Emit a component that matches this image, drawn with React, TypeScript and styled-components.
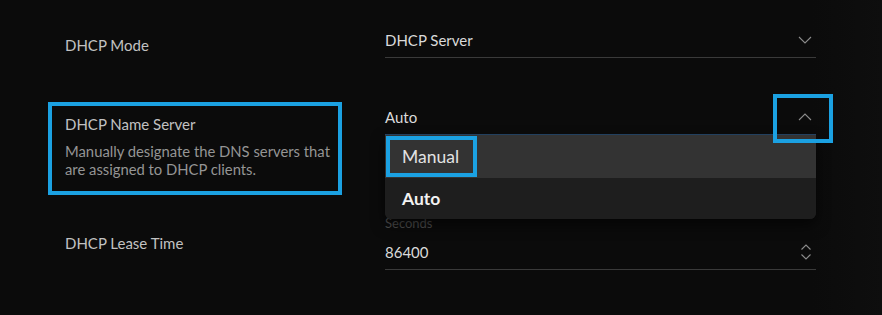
import React from 'react'
import styled, { createGlobalStyle } from 'styled-components'

const GlobalStyle = createGlobalStyle`
    html, body {
        margin: 0;
        padding: 0;
        background: #0b0b0b;
    }
    body {
        font-family: Lato, "Open Sans", sans-serif;
        -webkit-font-smoothing: antialiased;
    }
`

const HIGHLIGHT = '#1ba1e2'

export default function App() {
    return (
        <Page>
            <GlobalStyle />
            <Form>
                <Row $top={30}>
                    <Label $offset={5}>DHCP Mode</Label>
                    <Field>
                        <FieldValue>DHCP Server</FieldValue>
                        <ChevronDown />
                    </Field>
                </Row>
                <Row $top={44}>
                    <HighlightedLabel>
                        <Title>DHCP Name Server</Title>
                        <Description>
                            Manually designate the DNS servers that are assigned to DHCP clients.
                        </Description>
                    </HighlightedLabel>
                    <Field $focused $offset={5}>
                        <FieldValue>Auto</FieldValue>
                        <ChevronUp />
                        <IconHighlight />
                        <Menu>
                            <Option $active>
                                <OptionHighlight>Manual</OptionHighlight>
                            </Option>
                            <Option $selected>Auto</Option>
                        </Menu>
                    </Field>
                </Row>
                <Row $top={20}>
                    <Label $offset={18}>DHCP Lease Time</Label>
                    <Field $bottom>
                        <FieldValueStack>
                            <Hint>Seconds</Hint>
                            <NumberValue>86400</NumberValue>
                        </FieldValueStack>
                        <Spinner />
                    </Field>
                </Row>
            </Form>
        </Page>
    )
}

function ChevronDown() {
    return (
        <Icon width="14" height="8" viewBox="0 0 14 8">
            <polyline points="1,1 7,7 13,1" />
        </Icon>
    )
}

function ChevronUp() {
    return (
        <Icon width="14" height="8" viewBox="0 0 14 8">
            <polyline points="1,7 7,1 13,7" />
        </Icon>
    )
}

function Spinner() {
    return (
        <Icon width="12" height="18" viewBox="0 0 12 18">
            <polyline points="1.5,6.5 6,2 10.5,6.5" />
            <polyline points="1.5,11.5 6,16 10.5,11.5" />
        </Icon>
    )
}

const Page = styled.div`
    min-height: 315px;
    background: linear-gradient(to right, #0b0b0b 92%, #0e0e0e 100%);
    padding-left: 65px;
    box-sizing: border-box;
    overflow: hidden;
`

const Form = styled.div`
    display: flex;
    flex-direction: column;
    width: 751px;
`

const Row = styled.div<{ $top: number }>`
    display: grid;
    grid-template-columns: 320px 431px;
    align-items: start;
    margin-top: ${p => p.$top}px;
`

const Label = styled.div<{ $offset: number }>`
    margin-top: ${p => p.$offset}px;
    font-size: 15px;
    line-height: 20px;
    color: #c2c2c2;
`

const HighlightedLabel = styled.div`
    width: 294px;
    height: 93px;
    box-sizing: border-box;
    margin-left: -17px;
    border: 4px solid ${HIGHLIGHT};
    padding: 8px 8px 0 13px;
`

const Title = styled.div`
    font-size: 15px;
    line-height: 20px;
    color: #c2c2c2;
`

const Description = styled.div`
    margin-top: 8px;
    font-size: 14.8px;
    line-height: 18px;
    color: #959595;
`

const Field = styled.div<{ $focused?: boolean; $offset?: number; $bottom?: boolean }>`
    position: relative;
    display: flex;
    align-items: ${p => (p.$bottom ? 'flex-end' : 'center')};
    justify-content: space-between;
    margin-top: ${p => p.$offset ?? 0}px;
    padding: 0 4px 7px 0;
    border-bottom: 1px solid ${p => (p.$focused ? '#26476a' : '#3a3a3a')};
`

const FieldValue = styled.div`
    font-size: 15px;
    line-height: 20px;
    color: #dadada;
`

const FieldValueStack = styled.div`
    display: flex;
    flex-direction: column;
`

const Hint = styled.div`
    font-size: 13px;
    line-height: 16px;
    color: #4f4f4f;
`

const NumberValue = styled(FieldValue)`
    margin-top: 10.5px;
`

const Icon = styled.svg`
    fill: none;
    stroke: #8c8c8c;
    stroke-width: 1.1;
    flex-shrink: 0;
    margin-bottom: 1px;
`

const IconHighlight = styled.div`
    position: absolute;
    right: -17px;
    top: -13px;
    width: 60px;
    height: 49px;
    box-sizing: border-box;
    border: 4px solid ${HIGHLIGHT};
    z-index: 2;
`

const Menu = styled.div`
    position: absolute;
    top: calc(100% + 1px);
    left: 0;
    right: 0;
    display: flex;
    flex-direction: column;
    background: #1e1e1e;
    border-radius: 0 0 6px 6px;
    overflow: hidden;
    box-shadow: 0 6px 14px rgba(0, 0, 0, 0.6);
    z-index: 1;
`

const Option = styled.div<{ $active?: boolean; $selected?: boolean }>`
    display: flex;
    align-items: center;
    height: ${p => (p.$active ? 43 : 41)}px;
    padding-left: ${p => (p.$active ? 1 : 17)}px;
    background: ${p => (p.$active ? '#333333' : '#1e1e1e')};
    font-size: 17.5px;
    font-weight: ${p => (p.$selected ? 700 : 400)};
    color: ${p => (p.$selected ? '#f2f2f2' : '#e2e2e2')};
`

const OptionHighlight = styled.span`
    display: flex;
    align-items: center;
    height: 41px;
    box-sizing: border-box;
    border: 4px solid ${HIGHLIGHT};
    padding: 0 14px 0 12px;
`
